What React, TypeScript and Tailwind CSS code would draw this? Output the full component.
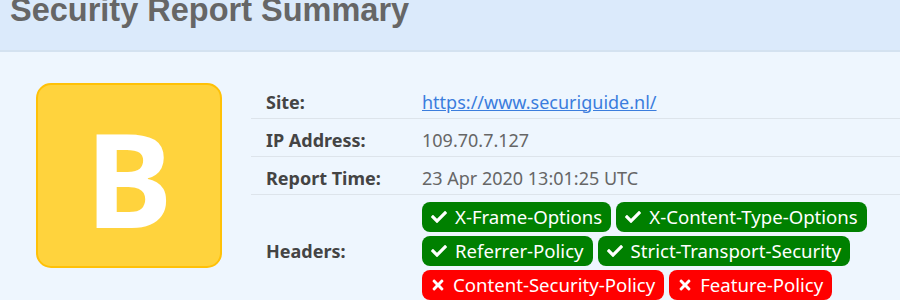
import { FaCheck, FaTimes } from 'react-icons/fa'

const headers = [
    { name: 'X-Frame-Options', ok: true },
    { name: 'X-Content-Type-Options', ok: true },
    { name: 'Referrer-Policy', ok: true },
    { name: 'Strict-Transport-Security', ok: true },
    { name: 'Content-Security-Policy', ok: false },
    { name: 'Feature-Policy', ok: false },
]

function Badge({ name, ok }: { name: string; ok: boolean }) {
    return (
        <span
            className={`flex items-center gap-[8px] h-[30px] px-[9px] rounded-[8px] text-white text-[18.6px] leading-none ${
                ok ? 'bg-[#008000]' : 'bg-[#ff0000]'
            }`}
        >
            {ok ? <FaCheck className="w-[16px] h-[16px]" /> : <FaTimes className="w-[14px] h-[16px]" />}
            {name}
        </span>
    )
}

function Row({ label, children }: { label: string; children: React.ReactNode }) {
    return (
        <div className="flex items-center h-[38px] pt-[5px] border-b border-[#dde4eb]">
            <div className="w-[171px] shrink-0 pl-[15px] font-bold text-[#444]">{label}</div>
            <div className="text-[#666]">{children}</div>
        </div>
    )
}

export default function App() {
    return (
        <div
            className="h-[300px] overflow-hidden bg-[#eef6fe]"
            style={{ fontFamily: '"Noto Sans", sans-serif' }}
        >
            {/* Title band */}
            <div className="h-[52px] bg-[#dbeafb] border-b-2 border-[#d4e2f0] px-[10px] overflow-hidden">
                <h1
                    className="-mt-[8px] text-[32.5px] leading-[36px] font-bold text-[#666]"
                    style={{ fontFamily: '"Liberation Sans", Arial, sans-serif' }}
                >
                    Security Report Summary
                </h1>
            </div>

            <div className="flex items-start pt-[29px] pl-[36px]">
                {/* Grade */}
                <div className="mt-[2px] w-[186px] h-[185px] shrink-0 rounded-[15px] border-2 border-[#ffc107] bg-[#ffd33d] flex items-center justify-center">
                    <span className="text-white font-bold text-[131px] leading-none mt-[4px]">B</span>
                </div>

                {/* Summary table */}
                <div className="ml-[29px] flex-1 text-[18px]">
                    <Row label="Site:">
                        <a href="#" className="text-[#3b7ddd] underline">
                            https://www.securiguide.nl/
                        </a>
                    </Row>
                    <Row label="IP Address:">109.70.7.127</Row>
                    <Row label="Report Time:">23 Apr 2020 13:01:25 UTC</Row>
                    <div className="flex items-center pt-[7px]">
                        <div className="w-[171px] shrink-0 pl-[15px] font-bold text-[#444]">Headers:</div>
                        <div className="flex flex-wrap gap-x-[5px] gap-y-[4px]">
                            {headers.map((h) => (
                                <Badge key={h.name} name={h.name} ok={h.ok} />
                            ))}
                        </div>
                    </div>
                </div>
            </div>
        </div>
    )
}
